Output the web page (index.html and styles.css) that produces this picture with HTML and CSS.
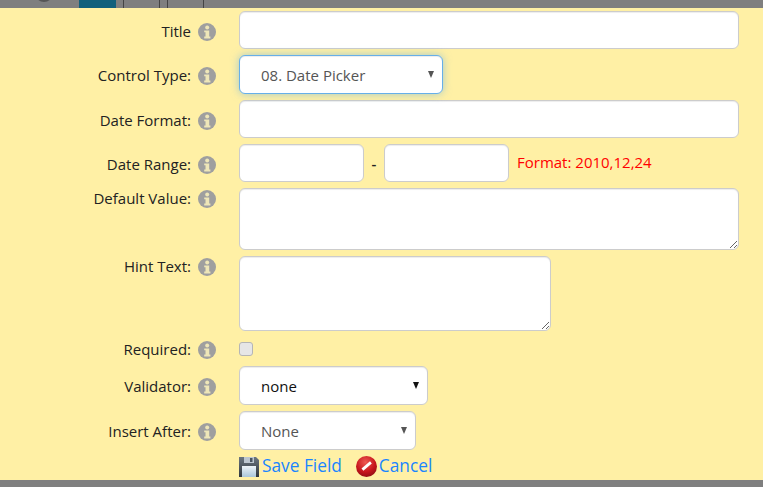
FILE: index.html
```html
<!DOCTYPE html>
<html lang="en">
<head>
    <meta charset="UTF-8">
    <title>Edit Field</title>
    <link rel="stylesheet" href="styles.css">
</head>
<body>
    <svg class="defs" width="0" height="0">
        <symbol id="info" viewBox="0 0 18 18">
            <circle cx="9" cy="9" r="9" fill="#9f9f9f"/>
            <circle cx="9.2" cy="4.4" r="2" fill="#eee6b8"/>
            <path d="M6.2 7.4h5v6.2h1.2v1.9H6.2v-1.9h1.3V9.3H6.2z" fill="#eee6b8"/>
        </symbol>
    </svg>

    <div class="tabs">
        <span class="tab-dot"></span>
        <span class="tab active"></span>
        <span class="tab narrow"></span>
        <span class="tab wide"></span>
        <span class="tab narrow"></span>
        <span class="tab wide"></span>
    </div>

    <form class="panel">
        <div class="row">
            <label class="lbl">Title</label>
            <svg class="info"><use href="#info"/></svg>
            <input class="box w-full" type="text">
        </div>
        <div class="row tall">
            <label class="lbl">Control Type:</label>
            <svg class="info"><use href="#info"/></svg>
            <div class="sel-wrap grey">
                <select class="box sel focus w-204"><option>08. Date Picker</option></select>
            </div>
        </div>
        <div class="row">
            <label class="lbl">Date Format:</label>
            <svg class="info"><use href="#info"/></svg>
            <input class="box w-full" type="text">
        </div>
        <div class="row">
            <label class="lbl">Date Range:</label>
            <svg class="info"><use href="#info"/></svg>
            <input class="box w-125" type="text">
            <span class="dash">-</span>
            <input class="box w-125" type="text">
            <span class="note">Format: 2010,12,24</span>
        </div>
        <div class="row top">
            <label class="lbl">Default Value:</label>
            <svg class="info"><use href="#info"/></svg>
            <textarea class="box w-full h-62"></textarea>
        </div>
        <div class="row top">
            <label class="lbl">Hint Text:</label>
            <svg class="info"><use href="#info"/></svg>
            <textarea class="box w-312 h-75"></textarea>
        </div>
        <div class="row tall check-row">
            <label class="lbl">Required:</label>
            <svg class="info"><use href="#info"/></svg>
            <span class="check"></span>
        </div>
        <div class="row tall">
            <label class="lbl">Validator:</label>
            <svg class="info"><use href="#info"/></svg>
            <div class="sel-wrap">
                <select class="box sel dark w-189"><option>none</option></select>
            </div>
        </div>
        <div class="row tall">
            <label class="lbl">Insert After:</label>
            <svg class="info"><use href="#info"/></svg>
            <div class="sel-wrap grey">
                <select class="box sel w-177"><option>None</option></select>
            </div>
        </div>
        <div class="actions">
            <a class="action" href="#">
                <svg class="ico-save" viewBox="0 0 20 21">
                    <defs>
                        <linearGradient id="disk" x1="0" y1="0" x2="0" y2="1">
                            <stop offset="0" stop-color="#6b7680"/>
                            <stop offset="1" stop-color="#2f363d"/>
                        </linearGradient>
                        <linearGradient id="label" x1="0" y1="0" x2="0" y2="1">
                            <stop offset="0" stop-color="#eef4f8"/>
                            <stop offset="1" stop-color="#a9c6da"/>
                        </linearGradient>
                    </defs>
                    <path d="M0 1h17l3 3v17H0z" fill="url(#disk)"/>
                    <path d="M5 1h10v6H5z" fill="#bcc6cf"/>
                    <path d="M11 2h2.5v4H11z" fill="#4a5560"/>
                    <path d="M3 10h14v11H3z" fill="url(#label)"/>
                </svg>Save Field</a>
            <a class="action" href="#">
                <svg class="ico-cancel" viewBox="0 0 21 21">
                    <defs>
                        <radialGradient id="red" cx="45%" cy="30%" r="75%">
                            <stop offset="0" stop-color="#ee5a54"/>
                            <stop offset="0.6" stop-color="#c8161c"/>
                            <stop offset="1" stop-color="#8c0d12"/>
                        </radialGradient>
                    </defs>
                    <circle cx="10.5" cy="10.5" r="10.5" fill="url(#red)"/>
                    <path d="M5.5 12.6 14 5.2l1.8 2.2-8.400 7.400z" fill="#fff"/>
                </svg>Cancel</a>
        </div>
    </form>
    <div class="foot"></div>
</body>
</html>
```

FILE: styles.css
```css
* { box-sizing: border-box; }
html, body { height: 100%; }
body {
    margin: 0;
    background: #fff0a5;
    font-family: "Open Sans", sans-serif;
    font-size: 15px;
    color: #222;
    overflow: hidden;
    display: flex;
    flex-direction: column;
}
.defs { position: absolute; }

.tabs {
    height: 8px;
    background: #7f7f7f;
    display: flex;
    flex: none;
    overflow: hidden;
    padding-left: 35px;
}
.tab-dot {
    width: 18px;
    height: 18px;
    margin-top: -16px;
    margin-right: 26px;
    border-radius: 50%;
    background: #555;
}
.tab { height: 8px; border-right: 1px solid #444; }
.tab.active { width: 37px; background: #11607c; border: 0; }
.narrow { width: 8px; }
.wide { width: 36px; }

.panel {
    flex: 1;
    padding-top: 3px;
}
.row {
    display: flex;
    align-items: center;
    margin-bottom: 6px;
}
.row.top { align-items: flex-start; }
.lbl {
    width: 191px;
    flex: none;
    padding-top: 2px;
    text-align: right;
}
.row.tall .lbl { padding-top: 0; }
.row.top .lbl { padding-top: 0; line-height: 20px; }
.info {
    width: 18px;
    height: 18px;
    margin: 4px 23px 0 7px;
    flex: none;
}
.row.tall .info { margin-top: 2px; }
.row.top .info { margin-top: 2px; }
.box {
    display: block;
    height: 38px;
    border: 1px solid #ccc;
    border-radius: 6px;
    background: #fff;
    box-shadow: inset 0 1px 1px rgba(0,0,0,0.075);
    font-family: "Open Sans", sans-serif;
    font-size: 15px;
    color: #555;
    outline: none;
}
.w-full { width: 500px; }
.w-125 { width: 125px; }
.w-204 { width: 204px; }
.w-189 { width: 189px; }
.w-177 { width: 177px; }
.w-312 { width: 312px; }
.h-62 { height: 62px; }
.h-75 { height: 75px; }

.sel {
    appearance: none;
    height: 39px;
    padding: 0 30px 0 21px;
}
.sel.dark { color: #111; }
.focus {
    border-color: #66afe9;
    box-shadow: inset 0 1px 1px rgba(0,0,0,0.075), 0 0 8px rgba(102,175,233,0.6);
}
.sel-wrap { position: relative; }
.sel-wrap::after {
    content: "";
    position: absolute;
    right: 9px;
    top: 16px;
    border-style: solid;
    border-width: 7px 3.5px 0;
    border-color: #111 transparent transparent;
}
.sel-wrap.grey::after { border-top-color: #555; }

.dash {
    width: 20px;
    text-align: center;
    font-weight: 600;
}
.note {
    margin-left: 8px;
    margin-top: -2px;
    color: #f00;
}

.check-row { height: 23px; }
.check {
    width: 14px;
    height: 14px;
    border: 1px solid #b5b5b5;
    border-radius: 3px;
    background: #e6e6e6;
}

.actions {
    display: flex;
    align-items: flex-start;
    gap: 14px;
    height: 24px;
    padding-left: 239px;
    font-size: 17.3px;
    line-height: 20px;
}
.action {
    display: flex;
    align-items: flex-start;
    color: #1a85ff;
    text-decoration: none;
}
.ico-save { width: 20px; height: 21px; margin-right: 3px; flex: none; }
.ico-cancel { width: 21px; height: 21px; margin-right: 2px; flex: none; }

.foot {
    height: 7px;
    flex: none;
    background: #7f7f7f;
}
```
